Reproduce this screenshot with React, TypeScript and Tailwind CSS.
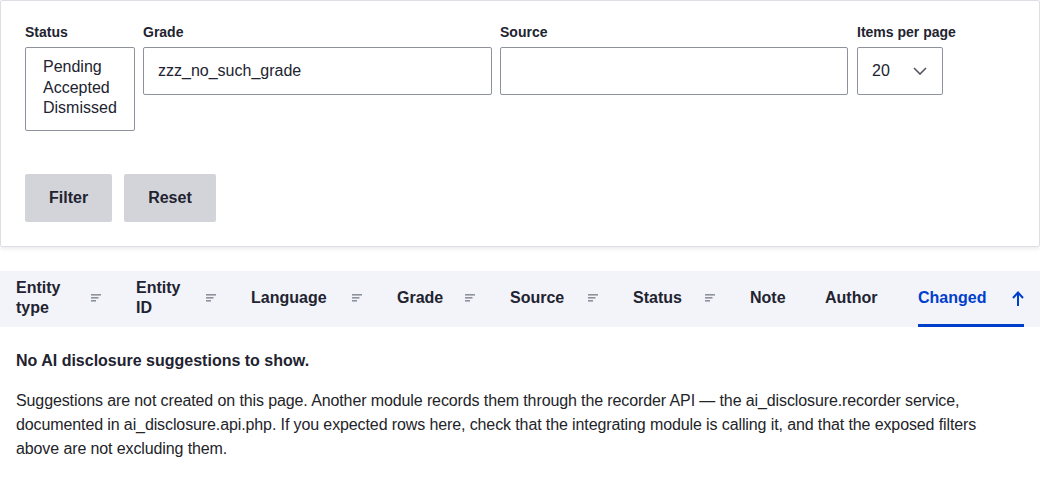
import type { ReactNode } from 'react'

const font = { fontFamily: '"Liberation Sans", Arial, sans-serif' }

function SortIcon() {
  return (
    <svg width="10" height="8" viewBox="0 0 10 8" className="shrink-0">
      <rect x="0" y="0" width="10" height="1.6" fill="#8e929c" />
      <rect x="0" y="3" width="7.5" height="1.6" fill="#8e929c" />
      <rect x="0" y="6" width="5" height="1.6" fill="#8e929c" />
    </svg>
  )
}

function Field({ label, children }: { label: string; children: ReactNode }) {
  return (
    <div className="flex flex-col">
      <label className="text-[14px] font-bold leading-[18px] text-[#222330] mb-[6px]">{label}</label>
      {children}
    </div>
  )
}

const columns = [
  { label: ['Entity', 'type'], width: 'w-[120px]', sort: true },
  { label: ['Entity', 'ID'], width: 'w-[115px]', sort: true },
  { label: ['Language'], width: 'w-[146px]', sort: true },
  { label: ['Grade'], width: 'w-[113px]', sort: true },
  { label: ['Source'], width: 'w-[123px]', sort: true },
  { label: ['Status'], width: 'w-[117px]', sort: true },
  { label: ['Note'], width: 'w-[75px]', sort: false },
  { label: ['Author'], width: 'w-[93px]', sort: false },
]

export default function App() {
  return (
    <div className="bg-white w-[1040px] min-h-[487px] text-[#222330]" style={font}>
      {/* Exposed filters */}
      <div className="border border-[#dedfe4] rounded-[2px] shadow-[0_2px_4px_rgba(0,0,0,0.08)] px-6 pt-[22px] pb-6">
        <div className="flex items-start gap-2">
          <Field label="Status">
            <div className="w-[110px] h-[84px] border border-[#8e929c] rounded-[2px] pl-[17px] pt-[9px] text-[16px] leading-[20.5px]">
              <div>Pending</div>
              <div>Accepted</div>
              <div>Dismissed</div>
            </div>
          </Field>
          <Field label="Grade">
            <div className="w-[349px] h-12 border border-[#8e929c] rounded-[2px] px-[14px] flex items-center text-[16px]">
              zzz_no_such_grade
            </div>
          </Field>
          <Field label="Source">
            <div className="w-[348px] h-12 border border-[#8e929c] rounded-[2px]" />
          </Field>
          <div className="ml-px">
            <Field label="Items per page">
              <div className="w-[86px] h-12 border border-[#8e929c] rounded-[2px] pl-[14px] pr-[15px] flex items-center justify-between text-[16px]">
                <span>20</span>
                <svg width="14" height="8" viewBox="0 0 14 8" fill="none">
                  <path d="M1 1l6 6 6-6" stroke="#545560" strokeWidth="1.6" />
                </svg>
              </div>
            </Field>
          </div>
        </div>
        <div className="flex gap-3 mt-[43px]">
          <button className="h-12 px-6 rounded-[2px] bg-[#d3d4d9] text-[16px] font-bold text-[#222330]">Filter</button>
          <button className="h-12 px-6 rounded-[2px] bg-[#d3d4d9] text-[16px] font-bold text-[#222330]">Reset</button>
        </div>
      </div>

      {/* Table header */}
      <div className="mt-[24px] h-14 bg-[#f3f4f9] flex items-stretch text-[16px] font-bold leading-[20px]">
        {columns.map((c) => (
          <div key={c.label.join(' ')} className={`${c.width} pl-4 pr-[19px] pb-[2px] flex items-center justify-between`}>
            <div>
              {c.label.map((l) => (
                <div key={l}>{l}</div>
              ))}
            </div>
            {c.sort && <SortIcon />}
          </div>
        ))}
        <div className="flex-1 pl-4 pr-4 flex">
          <div className="flex-1 flex items-center justify-between border-b-[3px] border-[#003ecc] pt-[1px] text-[#003ecc]">
            <span>Changed</span>
            <svg width="12" height="15" viewBox="0 0 12 15" fill="none">
              <path d="M6 15V2M1 7l5-5.5L11 7" stroke="#003ecc" strokeWidth="2" />
            </svg>
          </div>
        </div>
      </div>

      {/* Empty state */}
      <div className="px-4 pt-[22px] text-[16px] leading-[24px]">
        <p className="font-bold mb-[16px]">No AI disclosure suggestions to show.</p>
        <p className="max-w-[985px] text-[#232429] tracking-[-0.11px]">
          Suggestions are not created on this page. Another module records them through the recorder API — the
          ai_disclosure.recorder service, documented in ai_disclosure.api.php. If you expected rows here, check that
          the integrating module is calling it, and that the exposed filters above are not excluding them.
        </p>
      </div>
    </div>
  )
}
